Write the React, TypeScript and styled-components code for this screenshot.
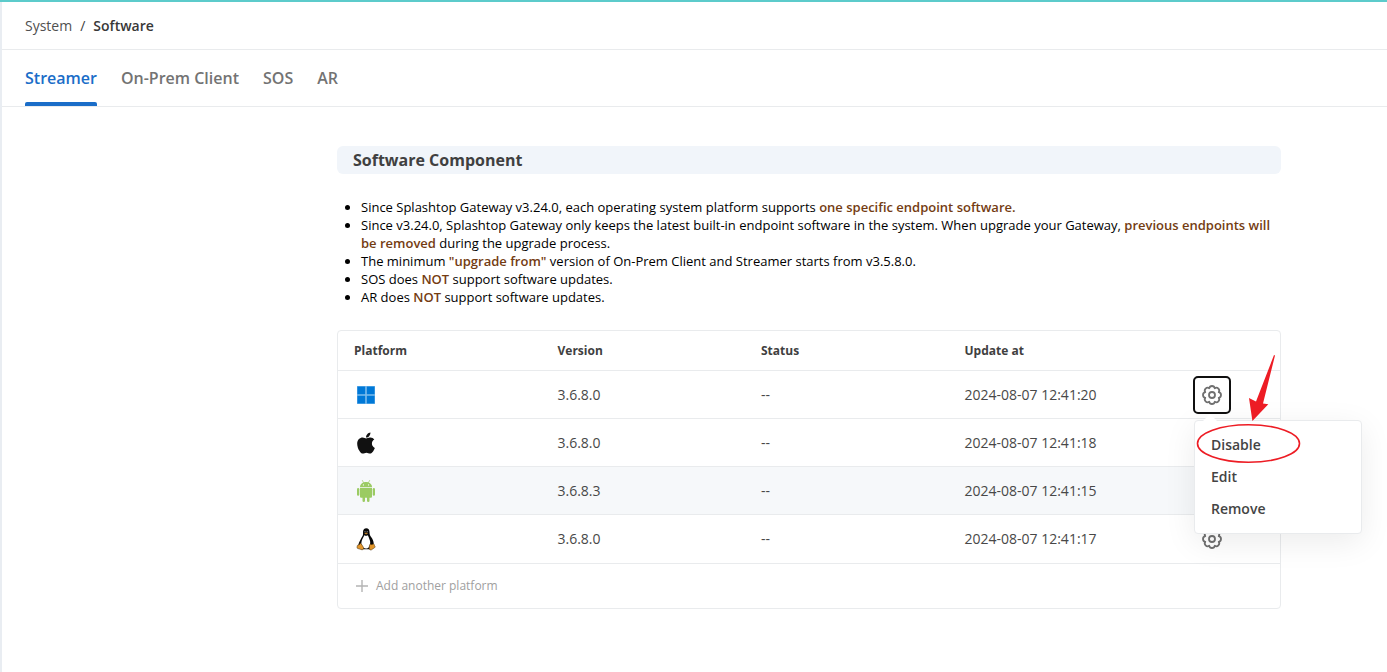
import React from "react";
import styled, { createGlobalStyle } from "styled-components";
import { FaApple } from "react-icons/fa";

const GlobalStyle = createGlobalStyle`
  *, *::before, *::after { box-sizing: border-box; }
  body {
    margin: 0;
    background: #fff;
    color: #404040;
    font-family: "Open Sans", "Noto Sans", sans-serif;
    font-size: 14px;
    line-height: 20px;
  }
`;

const Page = styled.div`
  min-height: 100vh;
  border-top: 2px solid #5ccbcb;
`;

const Main = styled.div`
  min-height: calc(100vh - 2px);
  border-left: 2px solid #e9edf2;
`;

const Breadcrumb = styled.nav`
  display: flex;
  align-items: center;
  gap: 8px;
  height: 48px;
  padding: 0 23px;
  border-bottom: 1px solid #e9ebed;
`;

const CrumbLink = styled.a`
  color: #505050;
  text-decoration: none;
`;

const CrumbCurrent = styled.span`
  color: #383838;
  font-weight: 600;
`;

const Tabs = styled.nav`
  display: flex;
  gap: 24px;
  height: 57px;
  padding: 0 23px;
  border-bottom: 1px solid #e9ebed;
`;

const Tab = styled.a<{ $active?: boolean }>`
  display: flex;
  flex-direction: column;
  justify-content: space-between;
  padding-top: 16px;
  font-size: 16px;
  line-height: 24px;
  font-weight: 600;
  text-decoration: none;
  color: ${(p) => (p.$active ? "#1a6dc8" : "#737373")};

  &::after {
    content: "";
    height: 4px;
    border-radius: 2px 2px 0 0;
    background: ${(p) => (p.$active ? "#1a6dc8" : "transparent")};
  }
`;

const Content = styled.main`
  padding: 39px 106px 40px 335px;
`;

const SectionTitle = styled.h1`
  margin: 0;
  padding: 0 16px;
  border-radius: 6px;
  background: #f1f5fa;
  font-size: 16px;
  line-height: 28px;
  font-weight: 700;
`;

const Notes = styled.ul`
  margin: 24px 0;
  padding: 0 0 0 24px;
  color: #000;
  font-size: 13px;
  line-height: 18px;
`;

const Accent = styled.strong`
  color: #743c12;
  font-weight: 600;
`;

const Panel = styled.section`
  border: 1px solid #e9ebed;
  border-radius: 4px;
`;

const Table = styled.table`
  width: 100%;
  table-layout: fixed;
  border-collapse: separate;
  border-spacing: 0;
`;

const HeadCell = styled.th<{ $actions?: boolean }>`
  width: ${(p) => (p.$actions ? "128px" : "auto")};
  height: 40px;
  padding: 0 16px;
  border-bottom: 1px solid #e9ebed;
  font-size: 12px;
  font-weight: 700;
  text-align: left;
`;

const Row = styled.tr<{ $hovered?: boolean }>`
  background: ${(p) => (p.$hovered ? "#f6f8fa" : "transparent")};

  &:not(:last-child) > td {
    border-bottom: 1px solid #e9ebed;
  }
`;

const Cell = styled.td`
  height: 48px;
  padding: 0 16px;
  color: #484848;
`;

const ActionCell = styled(Cell)`
  padding: 0 8px 0 0;
`;

const PlatformIcon = styled.span`
  display: flex;
  width: 24px;
  height: 24px;
`;

const MenuAnchor = styled.div`
  position: relative;
  width: 38px;
  height: 38px;
  margin: 0 auto;
`;

const GearButton = styled.button<{ $open?: boolean }>`
  display: flex;
  align-items: center;
  justify-content: center;
  width: 38px;
  height: 38px;
  padding: 0;
  border: 2px solid ${(p) => (p.$open ? "#101010" : "transparent")};
  border-radius: 5px;
  background: transparent;
  color: #707070;
`;

const Menu = styled.div`
  position: absolute;
  z-index: 2;
  top: 44px;
  left: 1px;
  width: 168px;
  padding: 8px 0;
  border: 1px solid #e9ebed;
  border-radius: 4px;
  background: #fff;
  box-shadow: 0 8px 32px rgba(0, 0, 0, 0.08);

  &::before {
    content: "";
    position: absolute;
    top: -7px;
    left: 8px;
    border: 7px solid transparent;
    border-top: 0;
    border-bottom-color: #fff;
  }
`;

const MenuItem = styled.button`
  display: block;
  width: 100%;
  padding: 0 16px;
  border: 0;
  background: transparent;
  color: #444;
  font: inherit;
  font-weight: 600;
  line-height: 32px;
  text-align: left;
`;

const Callout = styled.svg`
  position: absolute;
  z-index: 3;
  top: -24px;
  left: 0;
  pointer-events: none;
`;

const AddButton = styled.button`
  display: flex;
  align-items: center;
  gap: 7px;
  width: 100%;
  height: 45px;
  padding: 0 17px;
  border: 0;
  border-top: 1px solid #e9ebed;
  background: transparent;
  color: #a0a0a0;
  font: inherit;
  font-size: 12px;
`;

const GearIcon = () => (
  <svg width="20" height="20" viewBox="0 0 20 20" fill="none" stroke="currentColor" strokeWidth="1.8" strokeLinejoin="round" aria-hidden="true">
    <path d="M7.210 3.260A2.850 2.850 0 0 1 12.790 3.260A2.850 2.850 0 0 1 16.740 7.210A2.850 2.850 0 0 1 16.740 12.790A2.850 2.850 0 0 1 12.790 16.740A2.850 2.850 0 0 1 7.210 16.740A2.850 2.850 0 0 1 3.260 12.790A2.850 2.850 0 0 1 3.260 7.210A2.850 2.850 0 0 1 7.210 3.260Z" />
    <circle cx="10" cy="10" r="3" />
  </svg>
);

const WindowsIcon = () => (
  <svg width="24" height="24" viewBox="0 0 24 24" aria-hidden="true">
    <path fill="#7dbcec" d="M3 3h18v18H3z" />
    <path fill="#0078d7" d="M3.4 3.4h7.8v7.8H3.4zM12.8 3.4h7.8v7.8h-7.8zM3.4 12.8h7.8v7.8H3.4zM12.8 12.8h7.8v7.8h-7.8z" />
  </svg>
);

const AndroidIcon = () => (
  <svg width="24" height="24" viewBox="0 0 24 24" aria-hidden="true">
    <g fill="#9bcb63">
      <path d="M6 8.2C6 5.2 8.6 3 12 3s6 2.200 6 5.200z" />
      <path d="M6 9h12v8.400c0 .8-.6 1.400-1.400 1.400H7.400C6.600 18.800 6 18.200 6 17.400z" />
      <rect x="3" y="9" width="2.300" height="7.800" rx="1.150" />
      <rect x="18.700" y="9" width="2.300" height="7.800" rx="1.150" />
      <rect x="8.500" y="16" width="2.500" height="7" rx="1.200" />
      <rect x="13" y="16" width="2.500" height="7" rx="1.200" />
    </g>
    <path d="M8.400 1.500l1.200 2.200M15.600 1.500l-1.200 2.200" stroke="#9bcb63" strokeWidth=".7" strokeLinecap="round" />
    <circle cx="9.400" cy="5.900" r=".6" fill="#fff" />
    <circle cx="14.600" cy="5.900" r=".6" fill="#fff" />
  </svg>
);

const LinuxIcon = () => (
  <svg width="24" height="24" viewBox="0 0 24 24" aria-hidden="true">
    <path
      fill="#080808"
      d="M12.200 1.200c2.200 0 3.300 1.500 3.300 3.700 0 2.300.4 3.400 1.800 5.300 1.500 2.100 2.400 4.200 2.400 6.600 0 2.600-1.500 5.200-3.600 5.400H8.200c-2.200 0-4.200-2.500-3.700-5 .4-2 1.400-3.200 2.200-5 .7-1.700 2.200-2.900 2.300-4.600.1-1.200-.1-2.300.1-3.600.3-1.700 1.400-2.800 3.100-2.800z"
    />
    <path
      fill="#fff"
      d="M10.200 8.200c1.200.8 2.600.7 3.700 0 .5 1.700 1.800 3.800 2.200 6.100.4 2.900-.4 6.300-2.500 6.900-2 .5-4.100.3-5.200-1.200-1.500-2-1.200-4.600-.4-6.900.7-2.100 1.800-3 2.200-4.900z"
    />
    <ellipse cx="11" cy="4.800" rx=".5" ry=".7" fill="#aaa" />
    <ellipse cx="13.200" cy="4.800" rx=".5" ry=".7" fill="#aaa" />
    <path fill="#b57c2c" d="M10.200 6.400l1.900-.9 2 .8-1.900 1.200z" />
    <g fill="#e3972b" stroke="#3a2508" strokeWidth=".5">
      <path d="M6.300 16.300c1 .2 2.200 2.600 3.100 3.900.8 1.400-.2 2.800-1.700 2.500-1.500-.4-2.700-.9-4-1.200-1.100-.3-.5-1.500-.5-2.400 0-1.100 1-1 1.800-1.200.7-.2.700-1.600 1.300-1.600z" />
      <path d="M16.200 16.900c.8.700 2.600.7 3.200-.1.900 0 .8 1.500 1.300 2.200.5.600.8 1 0 1.600-1.200.8-2.200 1.500-3.200 2.200-1.400.6-2.500-.4-2.300-1.900.1-1.300.2-3.200 1-4z" />
    </g>
  </svg>
);

const PlusIcon = () => (
  <svg width="14" height="14" viewBox="0 0 14 14" aria-hidden="true">
    <path d="M7 1v12M1 7h12" stroke="#b4b4b4" strokeWidth="1.400" />
  </svg>
);

const MenuCallout = () => (
  <Callout width="120" height="120" viewBox="0 0 120 120" aria-hidden="true">
    <ellipse cx="55.500" cy="91.500" rx="51" ry="18.800" fill="none" stroke="#ed1c24" strokeWidth="1.600" />
    <path fill="#ed1c24" d="M81 3L82 3.500L70 51.500L75.300 52.200L59.400 69L56 46L63 49.500z" />
  </Callout>
);

type Platform = {
  name: string;
  icon: React.ReactNode;
  version: string;
  updated: string;
  hovered?: boolean;
  open?: boolean;
};

const platforms: Platform[] = [
  { name: "Windows", icon: <WindowsIcon />, version: "3.6.8.0", updated: "2024-08-07 12:41:20", open: true },
  { name: "macOS", icon: <FaApple size={24} color="#111" aria-hidden />, version: "3.6.8.0", updated: "2024-08-07 12:41:18" },
  { name: "Android", icon: <AndroidIcon />, version: "3.6.8.3", updated: "2024-08-07 12:41:15", hovered: true },
  { name: "Linux", icon: <LinuxIcon />, version: "3.6.8.0", updated: "2024-08-07 12:41:17" },
];

export default function App() {
  return (
    <Page>
      <GlobalStyle />
      <Main>
        <Breadcrumb aria-label="Breadcrumb">
          <CrumbLink href="#system">System</CrumbLink>
          <span>/</span>
          <CrumbCurrent>Software</CrumbCurrent>
        </Breadcrumb>
        <Tabs aria-label="Software">
          <Tab href="#streamer" $active aria-current="page">Streamer</Tab>
          <Tab href="#client">On-Prem Client</Tab>
          <Tab href="#sos">SOS</Tab>
          <Tab href="#ar">AR</Tab>
        </Tabs>
        <Content>
          <SectionTitle>Software Component</SectionTitle>
          <Notes>
            <li>
              Since Splashtop Gateway v3.24.0, each operating system platform supports{" "}
              <Accent>one specific endpoint software.</Accent>
            </li>
            <li>
              Since v3.24.0, Splashtop Gateway only keeps the latest built-in endpoint software in the system. When
              upgrade your Gateway, <Accent>previous endpoints will be removed</Accent> during the upgrade process.
            </li>
            <li>
              The minimum <Accent>"upgrade from"</Accent> version of On-Prem Client and Streamer starts from v3.5.8.0.
            </li>
            <li>
              SOS does <Accent>NOT</Accent> support software updates.
            </li>
            <li>
              AR does <Accent>NOT</Accent> support software updates.
            </li>
          </Notes>
          <Panel>
            <Table>
              <thead>
                <tr>
                  <HeadCell>Platform</HeadCell>
                  <HeadCell>Version</HeadCell>
                  <HeadCell>Status</HeadCell>
                  <HeadCell>Update at</HeadCell>
                  <HeadCell $actions aria-label="Actions" />
                </tr>
              </thead>
              <tbody>
                {platforms.map((p) => (
                  <Row key={p.name} $hovered={p.hovered}>
                    <Cell>
                      <PlatformIcon role="img" aria-label={p.name}>{p.icon}</PlatformIcon>
                    </Cell>
                    <Cell>{p.version}</Cell>
                    <Cell>--</Cell>
                    <Cell>{p.updated}</Cell>
                    <ActionCell>
                      <MenuAnchor>
                        <GearButton type="button" $open={p.open} aria-label={`${p.name} settings`}>
                          <GearIcon />
                        </GearButton>
                        {p.open && (
                          <>
                            <Menu>
                              <MenuItem type="button">Disable</MenuItem>
                              <MenuItem type="button">Edit</MenuItem>
                              <MenuItem type="button">Remove</MenuItem>
                            </Menu>
                            <MenuCallout />
                          </>
                        )}
                      </MenuAnchor>
                    </ActionCell>
                  </Row>
                ))}
              </tbody>
            </Table>
            <AddButton type="button">
              <PlusIcon />
              Add another platform
            </AddButton>
          </Panel>
        </Content>
      </Main>
    </Page>
  );
}
